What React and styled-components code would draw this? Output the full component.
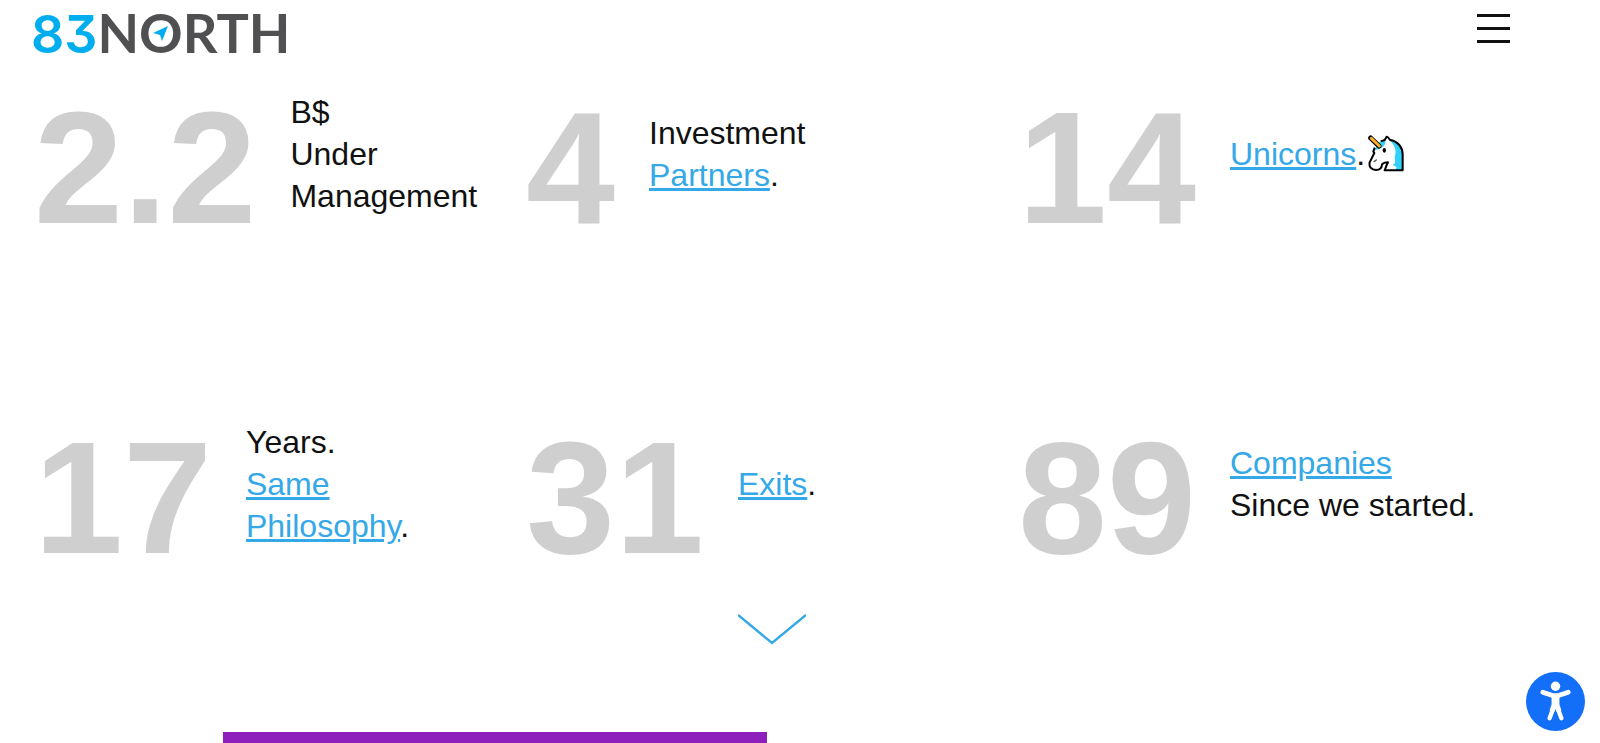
import React from 'react'
import styled, { createGlobalStyle } from "styled-components";

const GlobalStyle = createGlobalStyle`
  * {
    box-sizing: border-box;
  }

  body {
    margin: 0;
    background-color: #fff;
    color: #111;
    font-family: "Liberation Sans", Arial, sans-serif;
  }
`;

const Page = styled.div`
  min-height: 100vh;
  display: flex;
  flex-direction: column;
`;

const Header = styled.header`
  display: flex;
  justify-content: space-between;
  align-items: flex-start;
  padding: 6px 90px 0 31px;
  height: 66px;
`;

const Logo = styled.a`
  font-family: Lato, sans-serif;
  font-size: 54px;
  line-height: 54px;
  font-weight: 700;
  color: #505052;
  text-decoration: none;
`;

const LogoNumber = styled.span`
  font-family: Inter, sans-serif;
  font-size: 52px;
  font-weight: 600;
  font-feature-settings: "cv09";
  color: #00aeef;
`;

const Compass = styled.span`
  position: relative;

  svg {
    position: absolute;
    top: 50%;
    left: 50%;
    width: 16px;
    height: 16px;
    transform: translate(-50%, -50%);
  }
`;

const MenuButton = styled.button`
  display: flex;
  flex-direction: column;
  gap: 10px;
  width: 33px;
  padding: 8px 0;
  border: 0;
  background: none;
  cursor: pointer;
`;

const MenuBar = styled.span`
  width: 100%;
  height: 3px;
  background-color: #111;
`;

const Stats = styled.main`
  display: grid;
  grid-template-columns: repeat(3, 1fr);
  row-gap: 170px;
  padding: 22px 90px 0 34px;
`;

const Stat = styled.div`
  display: flex;
  align-items: center;
  gap: 34px;
`;

const StatNumber = styled.strong`
  font-size: 160px;
  line-height: 160px;
  color: #cfcfcf;
`;

const StatText = styled.p`
  margin: 0;
  padding-bottom: 28px;
  font-size: 32px;
  line-height: 42px;
  white-space: nowrap;
`;

const StatLink = styled.a`
  color: #35a8e8;
  text-decoration: underline;
`;

const UnicornIcon = styled.svg`
  width: 36px;
  height: 37px;
  margin-left: 3px;
  vertical-align: -7px;
`;

const ScrollRow = styled.div`
  display: flex;
  justify-content: center;
  padding: 35px 90px 0 34px;
`;

const ScrollLink = styled.a`
  display: block;

  svg {
    display: block;
  }
`;

const NextSection = styled.section`
  flex: 1;
  display: flex;
  padding-top: 87px;
`;

const PurpleCard = styled.div`
  width: 34%;
  min-height: 12px;
  margin-left: 223px;
  background-color: #8e1fbc;
`;

const AccessibilityButton = styled.button`
  position: fixed;
  right: 15px;
  bottom: 12px;
  width: 59px;
  height: 59px;
  padding: 0;
  border: 0;
  border-radius: 50%;
  background-color: #146ff8;
  cursor: pointer;

  svg {
    display: block;
  }
`;

function Unicorn() {
  return (
    <UnicornIcon viewBox="0 0 108 111" aria-hidden="true">
      <path
        d="M24 34 L36 22 L50 15 L56 4 L65 14 C90 18 104 38 104 58 V106 H50 L60 83 L46 83 C42 88 41 105 24 105 C10 105 3 96 5 84 L20 50 Z"
        fill="#fff"
      />
      <path
        d="M66 14 C90 18 104 38 104 58 V106 H82 L86 96 L74 90 C86 84 80 76 80 66 C86 50 82 30 66 18 Z"
        fill="#2fd0fa"
      />
      <path d="M28 24 L52 15 C54 30 44 42 20 45 Z" fill="#2fd0fa" />
      <path
        d="M20 38 L16 50 L19 54 L5 82 C2 96 11 105 24 105 C38 105 42 96 42 88 C46 86 44 82 60 82 C56 88 54 96 50 106 H104 V58 C104 38 90 18 65 14 C62 8 60 4 56 5 L50 15 L38 19"
        fill="none"
        stroke="#000"
        strokeWidth="6"
        strokeLinejoin="round"
      />
      <path d="M8 9 L33 33" stroke="#000" strokeWidth="15" strokeLinecap="round" />
      <path d="M10 10 L34 33" stroke="#fbb02c" strokeWidth="9" strokeLinecap="round" />
      <ellipse cx="49" cy="46" rx="5" ry="7" fill="#000" />
      <path d="M18 80 L25 75" stroke="#555" strokeWidth="4" strokeLinecap="round" />
    </UnicornIcon>
  );
}

const stats = [
  { number: "2.2", text: <>B$<br />Under<br />Management</> },
  { number: "4", text: <>Investment<br /><StatLink href="#partners">Partners</StatLink>.</> },
  { number: "14", text: <><StatLink href="#unicorns">Unicorns</StatLink>.<Unicorn /></> },
  { number: "17", text: <>Years.<br /><StatLink href="#philosophy">Same<br />Philosophy</StatLink>.</> },
  { number: "31", text: <><StatLink href="#exits">Exits</StatLink>.</> },
  { number: "89", text: <><StatLink href="#companies">Companies</StatLink><br />Since we started.</> },
];

export default function App() {
  return (
    <Page>
      <GlobalStyle />
      <Header>
        <Logo href="#home">
          <LogoNumber>83</LogoNumber>N
          <Compass>
            O
            <svg viewBox="0 0 16 16" aria-hidden="true">
              <path d="M15 1 L9 16 L7 10 L0 8 Z" fill="#00aeef" />
            </svg>
          </Compass>
          RTH
        </Logo>
        <MenuButton aria-label="Open menu">
          <MenuBar />
          <MenuBar />
          <MenuBar />
        </MenuButton>
      </Header>

      <Stats>
        {stats.map((stat) => (
          <Stat key={stat.number}>
            <StatNumber>{stat.number}</StatNumber>
            <StatText>{stat.text}</StatText>
          </Stat>
        ))}
      </Stats>

      <ScrollRow>
        <ScrollLink href="#more" aria-label="Scroll down">
          <svg width="68" height="32" viewBox="0 0 68 32">
            <path d="M0 2 L34 30 L68 2" fill="none" stroke="#35a8e8" strokeWidth="2.4" />
          </svg>
        </ScrollLink>
      </ScrollRow>

      <NextSection id="more">
        <PurpleCard />
      </NextSection>

      <AccessibilityButton aria-label="Accessibility options">
        <svg width="59" height="59" viewBox="0 0 60 60">
          <circle cx="30" cy="14.5" r="4.8" fill="#fff" />
          <path
            d="M17 20.5 L27 24 H33 L43 20.5"
            fill="none"
            stroke="#fff"
            strokeWidth="4.8"
            strokeLinecap="round"
            strokeLinejoin="round"
          />
          <path d="M26 23 H34 V33 L36 39 L32 42 L30 38 L28 42 L24 39 L26 33 Z" fill="#fff" />
          <path
            d="M28 36 L24 47 M32 36 L36 47"
            stroke="#fff"
            strokeWidth="4.4"
            strokeLinecap="round"
          />
        </svg>
      </AccessibilityButton>
    </Page>
  );
}
